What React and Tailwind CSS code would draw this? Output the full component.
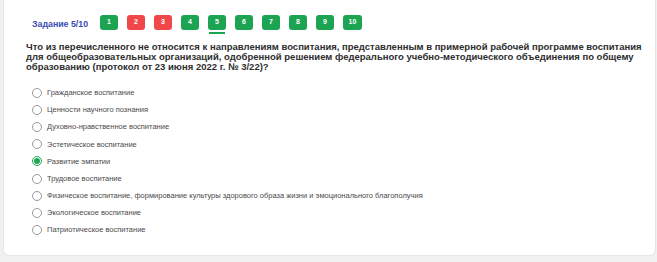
import { useState } from 'react';

const tasks = [
    { n: 1, status: 'ok' },
    { n: 2, status: 'bad' },
    { n: 3, status: 'bad' },
    { n: 4, status: 'ok' },
    { n: 5, status: 'ok' },
    { n: 6, status: 'ok' },
    { n: 7, status: 'ok' },
    { n: 8, status: 'ok' },
    { n: 9, status: 'ok' },
    { n: 10, status: 'ok' },
];

const options = [
    'Гражданское воспитание',
    'Ценности научного познания',
    'Духовно-нравственное воспитание',
    'Эстетическое воспитание',
    'Развитие эмпатии',
    'Трудовое воспитание',
    'Физическое воспитание, формирование культуры здорового образа жизни и эмоционального благополучия',
    'Экологическое воспитание',
    'Патриотическое воспитание',
];

const Radio = ({ checked }) => (
    checked ? (
        <span className="w-[10px] h-[10px] rounded-full border border-[#1fa855] flex items-center justify-center shrink-0">
            <span className="w-[6px] h-[6px] rounded-full bg-[#1fa855]"></span>
        </span>
    ) : (
        <span className="w-[10px] h-[10px] rounded-full border border-[#9a9a9a] shrink-0"></span>
    )
);

export default function App() {
    const [selected, setSelected] = useState(4);
    const current = 5;

    return (
        <div className="h-[262px] bg-[#f1f1f1] pl-[3px] pr-[1px] pb-[6px] font-['Liberation_Sans',Arial,sans-serif]">
            <div className="h-full bg-white border-x border-b border-[#e6e6e6] rounded-b-[6px] pl-[22px] pr-[4px]">
                <div className="flex pl-[6px] pt-[15px] h-[34px] items-start">
                    <span className="text-[8.8px] font-bold text-[#3a4db3] mt-[3px] w-[68px]">Задание 5/10</span>
                    <div className="flex gap-[9px]">
                        {tasks.map(t => (
                            <div key={t.n} className="flex flex-col items-center">
                                <button
                                    className={`h-[15px] rounded-[3px] text-white text-[7px] font-bold flex items-center justify-center ${t.n === 10 ? 'w-[19px]' : 'w-[18px]'} ${t.status === 'ok' ? 'bg-[#1da453]' : 'bg-[#f0484a]'}`}
                                >
                                    {t.n}
                                </button>
                                {t.n === current && <div className="w-[16px] h-[2px] bg-[#1da453] mt-[2px]"></div>}
                            </div>
                        ))}
                    </div>
                </div>

                <p className="mt-[8px] text-[9.5px] leading-[10px] font-bold text-[#2e2e2e] whitespace-nowrap">
                    Что из перечисленного не относится к направлениям воспитания, представленным в примерной рабочей программе воспитания<br />
                    для общеобразовательных организаций, одобренной решением федерального учебно-методического объединения по общему<br />
                    образованию (протокол от 23 июня 2022 г. № 3/22)?
                </p>

                <div className="mt-[12px] pl-[6px]">
                    {options.map((o, i) => (
                        <label key={i} onClick={() => setSelected(i)} className="flex items-center gap-[5px] h-[17.2px] cursor-pointer">
                            <Radio checked={selected === i} />
                            <span className="text-[7.5px] text-[#4a4a4a]">{o}</span>
                        </label>
                    ))}
                </div>
            </div>
        </div>
    );
}
